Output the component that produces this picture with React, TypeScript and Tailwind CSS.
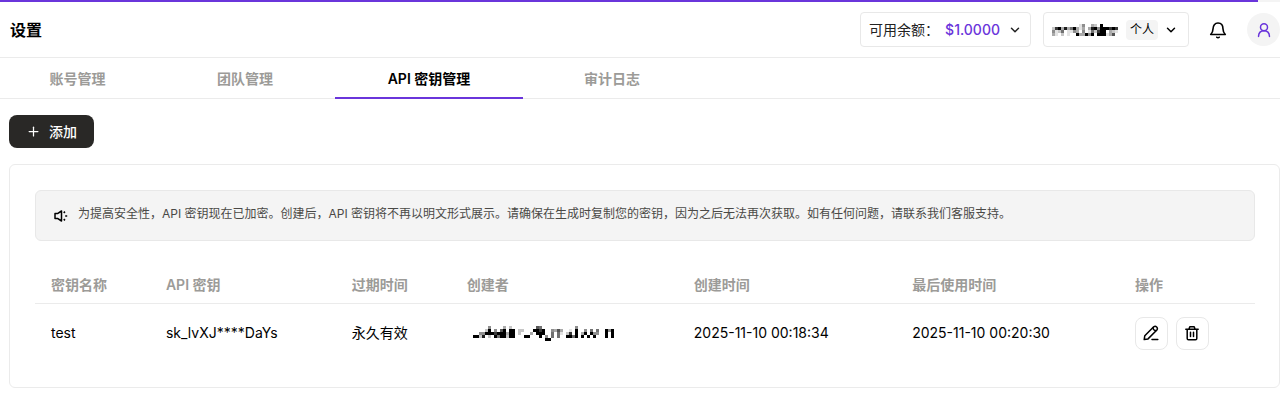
import { ChevronDown, Plus } from "lucide-react";

type Tab = {
    label: string;
    width: string;
    active?: boolean;
}

const tabs: Tab[] = [
    { label: "账号管理", width: "w-[155px]" },
    { label: "团队管理", width: "w-[180px]" },
    { label: "API 密钥管理", width: "w-[188px]", active: true },
    { label: "审计日志", width: "w-[178px]" },
];

const columns = [
    { label: "密钥名称", width: "w-[9.42%]" },
    { label: "API 密钥", width: "w-[15.23%]" },
    { label: "过期时间", width: "w-[9.42%]" },
    { label: "创建者", width: "w-[18.62%]" },
    { label: "创建时间", width: "w-[17.90%]" },
    { label: "最后使用时间", width: "w-[18.26%]" },
    { label: "操作", width: "w-[11.15%]" },
];

// Masked values. One string per mosaic column, top to bottom, 0 is blank and 9 is black
const accountMosaic = [
    "0243", "0711", "0920", "0352", "0800", "0311", "0510", "0940", "0339", "1103", "4343",
    "0009", "0314", "3859", "2920", "0479", "9999", "0999", "0901", "0733", "0926", "0710",
];

const creatorMosaic = [
    "00090", "00090", "00420", "00480", "02900", "49920", "00900", "04790", "00950", "06990",
    "39990", "00320", "29990", "09990", "00000", "02200", "02000", "00090", "00090", "00300",
    "09000", "69900", "57990", "09900", "00049", "00009", "04550", "03000", "06550", "03100",
    "00000", "00290", "01790", "00050", "49990", "00000", "00390", "04900", "00090", "05900",
    "00490", "05400", "00000", "00000", "09990", "04000", "09990",
];

const Mosaic = ({ cells, label, className }: { cells: string[]; label: string; className: string }) => (
    <svg role="img" aria-label={label} viewBox={`0 0 ${cells.length} ${cells[0].length}`} preserveAspectRatio="none" shapeRendering="crispEdges" className={className}>
        {cells.map((column, x) => column.split("").map((value, y) => value === "0" ? null : (
            <rect key={`${x}-${y}`} x={x} y={y} width={1} height={1} fill="#000" fillOpacity={Number(value) / 9} />
        )))}
    </svg>
);

const BellIcon = () => (
    <svg viewBox="0 0 18 18" fill="none" stroke="currentColor" strokeWidth="1.6" strokeLinecap="round" strokeLinejoin="round" className="size-[18px]">
        <path d="M4 8c0-3.600 1.900-6 5-6s5 2.400 5 6c0 2.400.8 3.900 2.300 5.500H1.700C3.200 11.900 4 10.400 4 8z" />
        <path d="M7.800 16.200c.7.700 1.700.7 2.400 0" />
    </svg>
);

const UserIcon = () => (
    <svg viewBox="0 0 16 16" fill="none" stroke="currentColor" strokeWidth="1.5" strokeLinecap="round" className="size-4">
        <circle cx="8" cy="5.300" r="3.500" />
        <path d="M2.500 14.400c.2-3.400 2.400-5.600 5.500-5.600s5.300 2.200 5.500 5.600" />
    </svg>
);

const SpeakerIcon = () => (
    <svg viewBox="0 0 14 14" fill="none" stroke="currentColor" strokeWidth="1.5" strokeLinejoin="round" className="size-3.5 shrink-0">
        <path d="M1 4.600h2.500L7.500 2v10L3.500 9.400H1z" />
        <path d="M9.700 3.900l1.300-1.300M11.200 7h2M9.700 10.100l1.300 1.300" />
    </svg>
);

const EditIcon = () => (
    <svg viewBox="0 0 16 16" fill="none" stroke="currentColor" strokeWidth="1.5" strokeLinecap="round" strokeLinejoin="round" className="size-4">
        <path d="M1.200 14.600l.6-3.900 8.900-8.900a2.300 2.300 0 0 1 3.200 3.200L5 13.900z" />
        <path d="M10.200 2.400c-.5 1.800 1.200 3.500 3.100 3.100M9 14.600h5.800" />
    </svg>
);

const TrashIcon = () => (
    <svg viewBox="0 0 16 16" fill="none" stroke="currentColor" strokeWidth="1.5" strokeLinecap="round" strokeLinejoin="round" className="size-4">
        <path d="M1.800 4.200h12.400M5 4l.8-2.200h4.400L11 4M3.200 4.400v9c0 .8.500 1.300 1.300 1.300h7c.8 0 1.300-.5 1.300-1.300v-9" />
        <path d="M6.500 7.200v4.300M9.500 7.200v4.300" />
    </svg>
);

const Header = () => (
    <header className="flex h-14 items-center justify-between border-b border-[#ebebeb] pl-2.5">
        <h1 className="text-base font-semibold">设置</h1>
        <div className="flex items-center">
            <button className="flex h-[35px] items-center rounded border border-[#e8e8e8] px-2 text-[#222]">
                可用余额：
                <span className="ml-1.5 font-medium text-[#6a35db]">$1.0000</span>
                <ChevronDown size={14} strokeWidth={2.5} className="ml-2" />
            </button>
            <button className="ml-3 flex h-[35px] items-center rounded border border-[#e8e8e8] pr-2.5 pl-2">
                <Mosaic cells={accountMosaic} label="账户" className="h-3 w-[66px]" />
                <span className="ml-2 rounded bg-[#f4f4f4] px-1 py-0.5 text-xs leading-4">个人</span>
                <ChevronDown size={14} strokeWidth={2.5} className="ml-1.5" />
            </button>
            <button aria-label="通知" className="ml-5"><BellIcon /></button>
            <button aria-label="用户" className="ml-5 flex size-[33px] items-center justify-center rounded-full bg-[#f4f4f4] text-[#6a35db]"><UserIcon /></button>
        </div>
    </header>
);

const Tabs = () => (
    <nav className="flex h-[41px] border-b border-[#ebebeb]">
        {tabs.map(({ label, width, active }) => (
            <a key={label} href="#" aria-current={active ? "page" : undefined} className={`-mb-px flex items-center justify-center border-b-2 pt-0.5 font-semibold ${width} ${active ? "border-[#6a35db] text-black" : "border-transparent text-[#9c9b98]"}`}>{label}</a>
        ))}
    </nav>
);

const KeyTable = () => (
    <table className="mt-6 w-full table-fixed text-left">
        <thead>
            <tr className="h-[38px] border-b border-[#ebebeb] text-[#9c9b98]">
                {columns.map(({ label, width }) => <th key={label} className={`pt-0.5 pl-4 font-semibold whitespace-nowrap ${width}`}>{label}</th>)}
            </tr>
        </thead>
        <tbody>
            <tr className="h-[60px] whitespace-nowrap">
                <td className="pl-4">test</td>
                <td className="pl-4">sk_lvXJ****DaYs</td>
                <td className="pl-4">永久有效</td>
                <td className="pl-[22px]"><Mosaic cells={creatorMosaic} label="创建者邮箱" className="h-[15px] w-[141px]" /></td>
                <td className="pl-4">2025-11-10 00:18:34</td>
                <td className="pl-4">2025-11-10 00:20:30</td>
                <td className="pl-4">
                    <div className="flex gap-2">
                        <button aria-label="编辑" className="flex size-[33px] items-center justify-center rounded-lg border border-[#e8e8e8]"><EditIcon /></button>
                        <button aria-label="删除" className="flex size-[33px] items-center justify-center rounded-lg border border-[#e8e8e8]"><TrashIcon /></button>
                    </div>
                </td>
            </tr>
        </tbody>
    </table>
);

const App = () => {
    return <div className="bg-white font-['Inter','Noto_Sans_CJK_SC',sans-serif] text-sm text-black">
        <div className="h-0.5 bg-[#f4f4f4]"><div className="h-full w-[98.3%] bg-[#6a35db]" /></div>
        <Header />
        <Tabs />
        <main className="pt-4 pl-[9px]">
            <button className="flex h-[33px] items-center gap-2 rounded-lg bg-[#292826] px-[17px] font-medium text-white">
                <Plus size={15} strokeWidth={2} />
                添加
            </button>
            <section className="mt-4 rounded-md border border-[#ebebeb] pt-[25px] pr-6 pb-6 pl-[25px]">
                <div className="flex h-[51px] items-start gap-2.5 rounded-md border border-[#e8e8e8] bg-[#f4f4f4] px-[18px] pt-3.5 text-xs text-[#4a4946]">
                    <span className="pt-1 text-black"><SpeakerIcon /></span>
                    <p className="leading-[18px]">为提高安全性，API 密钥现在已加密。创建后，API 密钥将不再以明文形式展示。请确保在生成时复制您的密钥，因为之后无法再次获取。如有任何问题，请联系我们客服支持。</p>
                </div>
                <KeyTable />
            </section>
        </main>
    </div>
}

export default App;
